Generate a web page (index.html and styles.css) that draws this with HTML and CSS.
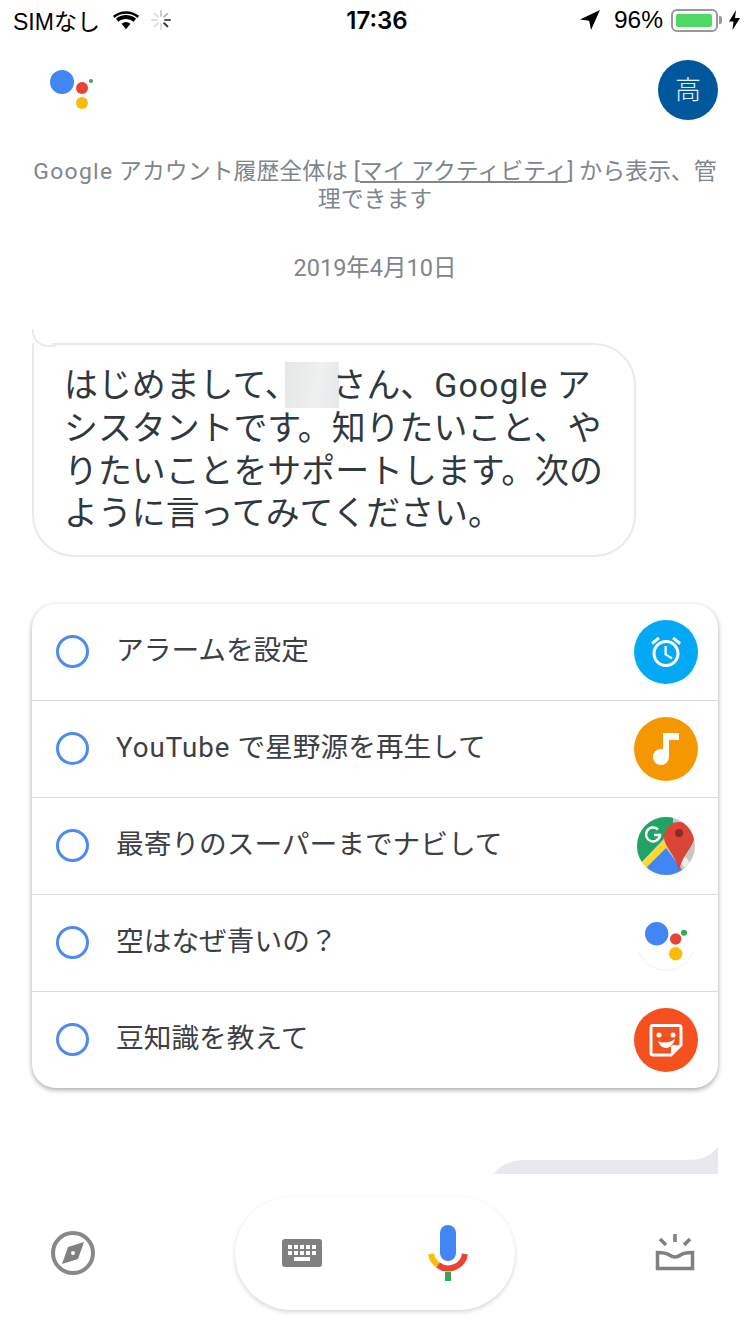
FILE: index.html

```html
<!DOCTYPE html>
<html lang="ja">
<head>
  <meta charset="UTF-8">
  <title>Google アシスタント</title>
  <meta name="viewport" content="width=device-width, initial-scale=1.0"/>
  <link rel="stylesheet" href="styles.css">
</head>
<body>
  <div class="status">
    <div class="status-left">
      <span>SIMなし</span>
      <svg class="wifi" width="26" height="20" viewBox="0 0 28 20"><path d="M14 20l-4.800-6a7.200 7.200 0 0 1 9.600 0zM14 8.800c-3.200 0-6 1.100-8.200 3L3.200 8.700A16.500 16.500 0 0 1 24.800 8.700l-2.600 3.100A12.600 12.600 0 0 0 14 8.800zM14 3.400C9.200 3.400 4.800 5.100 1.500 7.900L0 5.500A22 22 0 0 1 28 5.500L26.500 7.900C23.200 5.100 18.800 3.400 14 3.400z"/></svg>
      <svg class="spinner" width="20" height="20" viewBox="0 0 20 20" stroke-width="2" stroke-linecap="round" fill="none">
        <path d="M10 1v5" stroke="#ccc"/><path d="M16.400 3.600l-3.200 3.200" stroke="#bbb"/><path d="M19 10h-5" stroke="#555"/><path d="M16.400 16.400l-3.200-3.200" stroke="#333"/>
        <path d="M10 19v-5" stroke="#ddd"/><path d="M3.600 16.400l3.200-3.200" stroke="#ddd"/><path d="M1 10h5" stroke="#ddd"/><path d="M3.600 3.600l3.200 3.200" stroke="#ddd"/>
      </svg>
    </div>
    <div class="status-time">17:36</div>
    <div class="status-right">
      <svg width="20" height="20" viewBox="0 0 20 20"><path d="M20 0L0 9.500l9.200 1.300L11 20z"/></svg>
      <span class="percent">96%</span>
      <span class="battery"><span class="battery-level"></span></span>
      <span class="battery-tip"></span>
      <svg class="bolt" width="11" height="20" viewBox="0 0 11 20"><path d="M7 0L0 11.500h4.500L3.500 20 11 8H6z"/></svg>
    </div>
  </div>

  <header class="top">
    <svg class="logo" width="48" height="44" viewBox="0 0 48 44">
      <circle cx="14" cy="14" r="12" fill="#4285f4"/>
      <circle cx="34" cy="20" r="6" fill="#ea4335"/>
      <circle cx="34" cy="35" r="6" fill="#fbbc05"/>
      <circle cx="43" cy="13" r="2" fill="#34a853"/>
    </svg>
    <div class="avatar">高</div>
  </header>

  <p class="notice"><span class="latin">Google</span> アカウント履歴全体は [<u>マイ アクティビティ</u>] から表示、管<br>理できます</p>
  <p class="date">2019年4月10日</p>

  <div class="bubble">
    はじめまして、<span class="blur"></span>さん、<span class="latin">Google</span> ア<br>シスタントです。知りたいこと、や<br>りたいことをサポートします。次の<br>ように言ってみてください。
  </div>

  <div class="card">
    <div class="row">
      <span class="radio"></span><span class="row-text">アラームを設定</span>
      <span class="app app-alarm">
        <svg width="36" height="36" viewBox="0 0 24 24" fill="#fff"><path d="M22 5.720l-4.600-3.860-1.290 1.530 4.600 3.860L22 5.720zM7.880 3.390L6.600 1.860 2 5.710l1.290 1.530 4.590-3.850zM12.500 8H11v6l4.750 2.850.75-1.230-4-2.370V8zM12 4c-4.970 0-9 4.030-9 9s4.030 9 9 9 9-4.030 9-9-4.030-9-9-9zm0 16c-3.870 0-7-3.130-7-7s3.130-7 7-7 7 3.130 7 7-3.130 7-7 7z"/></svg>
      </span>
    </div>
    <div class="row">
      <span class="radio"></span><span class="row-text"><span class="latin">YouTube</span> で星野源を再生して</span>
      <span class="app app-music">
        <svg width="64" height="64" viewBox="0 0 64 64" fill="#fff"><circle cx="27" cy="40" r="8"/><path d="M29 16h16v7H35v17h-6z"/></svg>
      </span>
    </div>
    <div class="row">
      <span class="radio"></span><span class="row-text">最寄りのスーパーまでナビして</span>
      <span class="app">
        <svg width="58" height="58" viewBox="0 0 58 58">
          <clipPath id="mapClip"><circle cx="29" cy="29" r="29"/></clipPath>
          <g clip-path="url(#mapClip)">
            <rect width="58" height="58" fill="#c6c6c6"/>
            <path d="M0 0h36v12L0 50z" fill="#1fa463"/>
            <path d="M0 50L32 18l4 6L6 58H0z" fill="#fdd835"/>
            <path d="M9 51l20-20 20 27H9z" fill="#4285f4"/>
            <path d="M29 28l5-7 24 31-6 4z" fill="#eee"/>
            <path d="M42 5a15 15 0 0 0-15 15c0 10 11 16 15 34 4-18 15-24 15-34A15 15 0 0 0 42 5z" fill="#db4437"/>
            <circle cx="42" cy="16" r="4" fill="#8a2a20"/>
            <path d="M21 12.500A7 7 0 1 0 23 18h-6" fill="none" stroke="#fff" stroke-width="2.500"/>
          </g>
        </svg>
      </span>
    </div>
    <div class="row">
      <span class="radio"></span><span class="row-text">空はなぜ青いの？</span>
      <span class="app">
        <svg width="58" height="58" viewBox="0 0 58 58">
          <path d="M2 38a29 29 0 0 0 54 0" fill="none" stroke="#eef1f4" stroke-width="1"/>
          <circle cx="19.700" cy="19.700" r="11.700" fill="#4285f4"/>
          <circle cx="38.700" cy="25" r="5.700" fill="#ea4335"/>
          <circle cx="38.700" cy="39.700" r="6.700" fill="#fbbc05"/>
          <circle cx="47" cy="18.700" r="3" fill="#34a853"/>
        </svg>
      </span>
    </div>
    <div class="row">
      <span class="radio"></span><span class="row-text">豆知識を教えて</span>
      <span class="app app-sticker">
        <svg width="64" height="64" viewBox="0 0 64 64">
          <path d="M19 17.500h26a2 2 0 0 1 2 2V37L37 47H19a2 2 0 0 1-2-2V19.500a2 2 0 0 1 2-2z" fill="none" stroke="#fff" stroke-width="3"/>
          <path d="M47 37h-7a3 3 0 0 0-3 3v7z" fill="#fff"/>
          <circle cx="25" cy="27" r="2.500" fill="#fff"/>
          <circle cx="39" cy="27" r="2.500" fill="#fff"/>
          <path d="M24 33c5 2.500 11 2 17-2-2 6-5 9-9 9-3 0-6-2-8-7z" fill="#fff"/>
        </svg>
      </span>
    </div>
  </div>

  <div class="user-bubble">
    <svg width="224" height="27" viewBox="0 0 224 27"><path d="M0 27C6 18 16 13 32 13h160c14 0 24-3 32-13v27z" fill="#e8e9ee"/></svg>
  </div>

  <nav class="nav">
    <svg width="44" height="44" viewBox="0 0 44 44">
      <circle cx="22" cy="22" r="20" fill="none" stroke="#888" stroke-width="4"/>
      <path d="M33 11L17 16 11 33l16-5zM22 20a2 2 0 1 1 0 4 2 2 0 0 1 0-4z" fill="#808080" fill-rule="evenodd"/>
    </svg>
    <div class="pill">
      <svg width="40" height="28" viewBox="0 0 40 28">
        <path fill="#808080" fill-rule="evenodd" d="M3 0h34a3 3 0 0 1 3 3v22a3 3 0 0 1-3 3H3a3 3 0 0 1-3-3V3a3 3 0 0 1 3-3zM6 6v4h4V6zM12 6v4h4V6zM18 6v4h4V6zM24 6v4h4V6zM30 6v4h4V6zM6 12v4h4v-4zM12 12v4h4v-4zM18 12v4h4v-4zM24 12v4h4v-4zM30 12v4h4v-4zM12 18v4h16v-4z"/>
      </svg>
      <svg width="40" height="56" viewBox="0 0 40 56">
        <rect x="12" width="16" height="36" rx="8" fill="#4285f4"/>
        <path d="M3 29a17 17 0 0 0 7 11" fill="none" stroke="#fbbc05" stroke-width="6"/>
        <path d="M10 40a17 17 0 0 0 27-11" fill="none" stroke="#ea4335" stroke-width="6"/>
        <rect x="17" y="47" width="6" height="9" fill="#34a853"/>
      </svg>
    </div>
    <svg width="44" height="44" viewBox="0 0 44 44" fill="none" stroke="#808080" stroke-width="3">
      <path d="M22 3v8M7 8l6 6M37 8l-6 6" stroke-width="3.500"/>
      <path d="M4.500 21.500c5 0 9 .5 12 2.500 3.500 2.500 7.500 2.500 11 0 3-2 7-2.500 12-2.500v16h-35z" stroke-width="3.500"/>
    </svg>
  </nav>
</body>
</html>
```

FILE: styles.css

```css
* { box-sizing: border-box; }
html, body { margin: 0; padding: 0; }
body { width: 750px; height: 1334px; overflow: hidden; background: #fff; font-family: Roboto, "Noto Sans CJK JP", sans-serif; color: #3c4043; }

.status { display: flex; align-items: center; height: 40px; padding: 0 10px 0 13px; color: #000; font-family: "Liberation Sans", "Noto Sans CJK JP", sans-serif; font-size: 23px; }
.status-left, .status-right { flex: 1; display: flex; align-items: center; }
.status-right { justify-content: flex-end; }
.status-time { font-family: Inter, sans-serif; font-weight: 600; font-size: 24px; margin-left: 1px; }
.wifi { margin-left: 13px; }
.spinner { margin-left: 12px; }
.percent { margin-left: 14px; font-size: 24.500px; }
.battery { width: 47px; height: 23px; margin-left: 8px; padding: 3px; border: 2px solid #999; border-radius: 6px; }
.battery-level { display: block; width: 96%; height: 100%; background: #4cd964; border-radius: 2px; }
.battery-tip { width: 3px; height: 8px; margin-left: 1px; background: #999; border-radius: 0 2px 2px 0; }
.bolt { margin-left: 7px; }

.top { display: flex; justify-content: space-between; align-items: flex-start; height: 80px; padding: 20px 32px 0 48px; }
.logo { margin-top: 8px; }
.avatar { display: flex; align-items: center; justify-content: center; width: 60px; height: 60px; padding-bottom: 5px; border-radius: 50%; background: #01579b; color: #e3f2fd; font-size: 26px; font-weight: 300; }

.notice { margin: 38px 0 0; text-align: center; font-size: 22.900px; line-height: 28px; color: #80868b; white-space: nowrap; }
.notice .latin { letter-spacing: 1.300px; }
.date { margin: 40px 0 0; text-align: center; font-size: 23.500px; line-height: 28px; color: #80868b; }

.bubble { position: relative; width: 604px; margin: 61px 0 0 32px; padding: 17px 20px 19px 30px; border: 2px solid #e8eaed; border-radius: 0 42px 42px 42px; color: #2f383e; font-size: 33.900px; line-height: 42.600px; white-space: nowrap; }
.bubble::before { content: ""; position: absolute; z-index: 1; left: -2px; top: -16px; width: 22px; height: 16px; border-left: 2px solid #e8eaed; border-bottom: 2px solid #e8eaed; border-bottom-left-radius: 16px; }
.bubble::after { content: ""; position: absolute; left: 0; top: -2px; width: 18px; height: 2px; background: #fff; }
.bubble .latin { letter-spacing: 1.200px; }
.blur { display: inline-block; width: 54px; height: 46px; margin: 0 -6px 0 -14px; vertical-align: -11px; background: linear-gradient(100deg, #e4e6e7, #eff0f0 60%, #e6e7e9); }

.card { width: 686px; margin: 47px 0 0 32px; border-radius: 24px; background: #fff; box-shadow: 0 2px 5px rgba(0, 0, 0, .35); }
.row { display: flex; align-items: center; height: 97px; padding: 0 20px 0 24px; border-top: 1px solid #dadce0; }
.row:first-child { border-top: none; height: 96px; }
.radio { width: 33px; height: 33px; border: 3px solid #4d8bef; border-radius: 50%; }
.row-text { flex: 1; margin-left: 27px; margin-top: -2px; font-size: 27.700px; line-height: 36px; }
.row-text .latin { letter-spacing: 1px; }
.app { display: flex; align-items: center; justify-content: center; width: 64px; height: 64px; border-radius: 50%; }
.app-alarm { background: #03a9f4; }
.app-music { background: #f59700; }
.app-sticker { background: #f4511e; }

.user-bubble { display: flex; justify-content: flex-end; height: 27px; margin-top: 59px; padding-right: 32px; }
.user-bubble svg { display: block; }

.nav { display: flex; align-items: center; justify-content: space-between; height: 113px; margin-top: 23px; padding: 0 53px 0 51px; }
.pill { display: flex; align-items: center; justify-content: space-between; width: 280px; height: 113px; margin-left: 2px; padding: 0 47px; border-radius: 57px; background: #fff; box-shadow: 0 2px 4px rgba(0, 0, 0, .16); }
```
